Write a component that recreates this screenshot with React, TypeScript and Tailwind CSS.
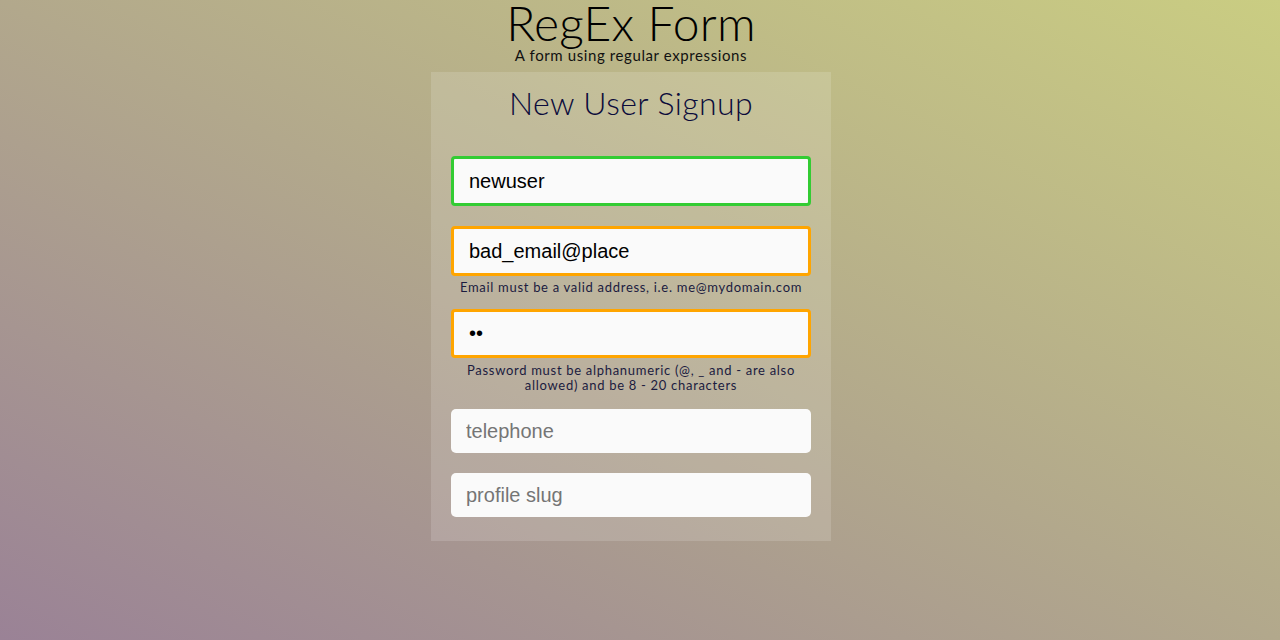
import React from "react";

export default function App() {
  const head = { fontFamily: '"Lato", "Noto Sans", sans-serif' };
  const inp = { fontFamily: '"Liberation Sans", Arial, sans-serif' };
  return (
    <div className="w-[1280px] h-[640px] bg-[linear-gradient(to_top_right,#9a8296_0%,#b2a88c_50%,#cacd82_100%)]">
      <div className="w-[1262px] flex flex-col items-center" style={head}>
        <h1 className="text-[48px] leading-[46px] text-black font-light tracking-[0.2px]">RegEx Form</h1>
        <p className="text-[15px] leading-[16px] mt-[1px] text-[#111] tracking-[0.6px]">A form using regular expressions</p>
        <div className="mt-[9px] w-[400px] bg-white/15 px-5 pt-[13px] pb-[24px] flex flex-col">
          <h2 className="text-[32px] leading-[36px] text-center text-[#0b0b3b] font-light tracking-[0.4px]">New User Signup</h2>
          <input
            className="mt-[35px] h-[50px] w-[360px] rounded-[4px] border-[3px] border-[#33cc33] bg-[#fafafa] px-[15px] text-[20px] text-black outline-none"
            style={inp}
            defaultValue="newuser"
          />
          <input
            className="mt-[20px] h-[50px] w-[360px] rounded-[4px] border-[3px] border-[#ffa500] bg-[#fafafa] px-[15px] text-[20px] text-black outline-none"
            style={inp}
            defaultValue="bad_email@place"
          />
          <p className="mt-[4px] text-[13px] leading-[15px] text-center text-[#1b1b3f] tracking-[0.7px]">
            Email must be a valid address, i.e. me@mydomain.com
          </p>
          <input
            type="password"
            className="mt-[14px] h-[49px] w-[360px] rounded-[4px] border-[3px] border-[#ffa500] bg-[#fafafa] px-[15px] text-[20px] text-black outline-none"
            style={inp}
            defaultValue="ab"
          />
          <p className="mt-[5px] text-[13px] leading-[15px] text-center text-[#1b1b3f] px-[8px] tracking-[0.7px]">
            Password must be alphanumeric (@, _ and - are also allowed) and be 8 - 20 characters
          </p>
          <input
            className="mt-[16px] h-[44px] w-[360px] rounded-[5px] bg-[#fafafa] px-[15px] text-[20px] text-black outline-none placeholder:text-[#757575]"
            style={inp}
            placeholder="telephone"
          />
          <input
            className="mt-[20px] h-[44px] w-[360px] rounded-[5px] bg-[#fafafa] px-[15px] text-[20px] text-black outline-none placeholder:text-[#757575]"
            style={inp}
            placeholder="profile slug"
          />
        </div>
      </div>
    </div>
  );
}
